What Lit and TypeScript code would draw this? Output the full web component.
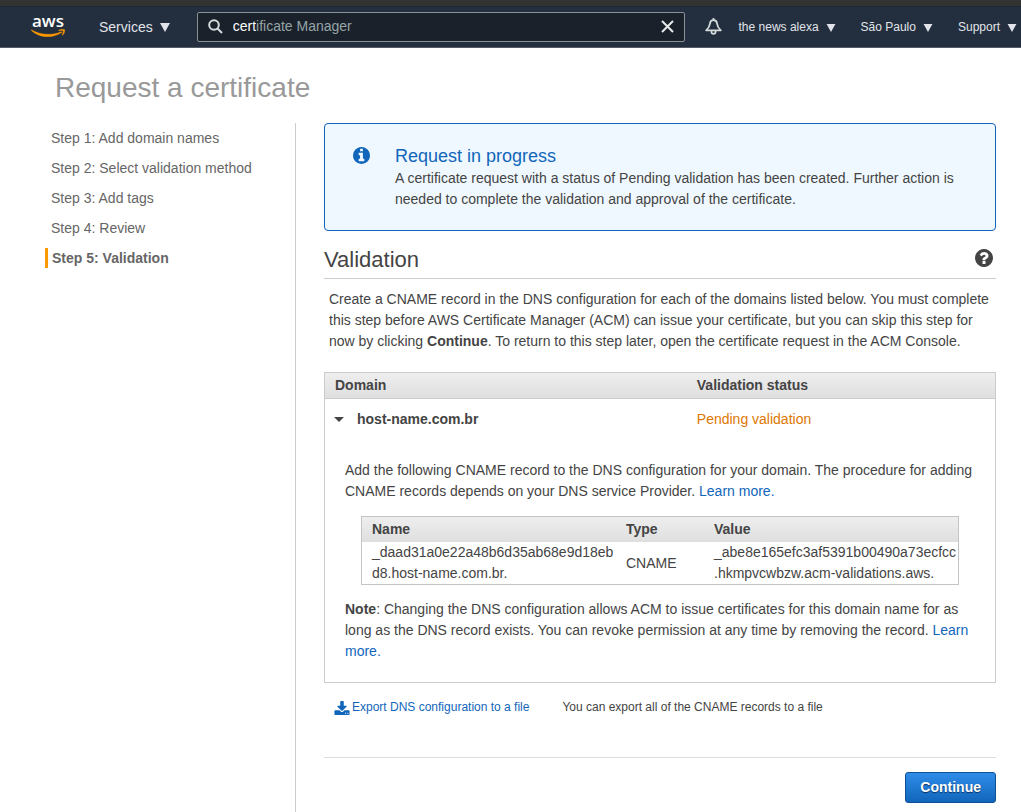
import { LitElement, html, css } from "lit";
import { customElement, property, state } from "lit/decorators.js";
import { classMap } from "lit/directives/class-map.js";

const caretDown = html`<svg class="caret" viewBox="0 0 10 9" aria-hidden="true"><path d="M0 0h10L5 9z" fill="currentColor" /></svg>`;

@customElement("console-header")
class ConsoleHeader extends LitElement {
  static styles = css`
    :host {
      display: block;
      border-top: 6px solid #333333;
      border-bottom: 1px solid #545b64;
      background: #232f3e;
      color: #e1e4ea;
    }
    .bar {
      display: flex;
      align-items: center;
      height: 41px;
      padding: 0 4px 0 31px;
      box-shadow: inset 0 1px 0 #1d2735;
      white-space: nowrap;
    }
    .logo {
      display: flex;
      flex-direction: column;
      align-items: center;
      width: 34px;
      padding-bottom: 3px;
      color: #ffffff;
      text-decoration: none;
      font: 600 17px/16px "Open Sans", "Noto Sans", sans-serif;
    }
    .smile {
      width: 34px;
      height: 8px;
    }
    button {
      display: flex;
      align-items: center;
      border: 0;
      padding: 0;
      background: none;
      color: inherit;
      font: inherit;
      cursor: pointer;
    }
    .services {
      gap: 7px;
      margin-left: 34px;
      padding-top: 2px;
      font-size: 14px;
    }
    .services .caret {
      width: 10px;
      height: 9px;
    }
    .search {
      display: flex;
      align-items: center;
      flex: 1;
      height: 28px;
      margin: 0 20px 0 27px;
      padding: 0 10px;
      border: 1px solid #879196;
      border-radius: 2px;
      background: #1a212b;
      font-size: 14px;
    }
    .glass {
      width: 15px;
      height: 15px;
      margin-right: 10px;
    }
    .query {
      field-sizing: content;
      border: 0;
      padding: 0;
      outline: 0;
      background: none;
      color: #ffffff;
      font: inherit;
    }
    .hint {
      flex: 1;
      color: #95a5a6;
    }
    .clear svg {
      width: 13px;
      height: 13px;
    }
    .bell {
      width: 17px;
      height: 17px;
    }
    .menus {
      display: flex;
      gap: 25px;
      margin-left: 17px;
      padding-top: 2px;
      font-size: 12px;
    }
    .menu {
      gap: 7px;
    }
    .menu .caret {
      width: 10px;
      height: 8px;
    }
  `;

  @state() private query = "cert";

  render() {
    return html`
      <header class="bar">
        <a class="logo" href="#">
          <span>aws</span>
          <svg class="smile" viewBox="0 113 304 69" aria-hidden="true" fill="#ff9900" stroke="#ff9900" stroke-width="3">
            <path d="M273.5,143.7c-32.9,24.3-80.7,37.2-121.8,37.2c-57.6,0-109.5-21.3-148.7-56.7c-3.1-2.8-0.3-6.6,3.4-4.4c42.4,24.6,94.7,39.5,148.8,39.5c36.5,0,76.6-7.6,113.5-23.2C274.2,133.6,278.9,139.7,273.5,143.7z" />
            <path d="M287.2,128.1c-4.2-5.4-27.8-2.6-38.5-1.3c-3.2,0.4-3.7-2.4-0.8-4.5c18.8-13.2,49.7-9.4,53.3-5c3.6,4.5-1,35.4-18.6,50.2c-2.7,2.3-5.3,1.1-4.1-1.9C282.5,155.7,291.4,133.4,287.2,128.1z" />
          </svg>
        </a>
        <button class="services">Services ${caretDown}</button>
        <div class="search" role="search">
          <svg class="glass" viewBox="0 0 15 15" aria-hidden="true" fill="none" stroke="#d5dbdb" stroke-width="2">
            <circle cx="6" cy="6" r="4.8" />
            <path d="M9.5 9.5L14 14" />
          </svg>
          <input
            class="query"
            aria-label="Search services"
            .value=${this.query}
            @input=${(e: Event) => (this.query = (e.target as HTMLInputElement).value)}
          />
          <span class="hint">${this.query === "cert" ? "ificate Manager" : ""}</span>
          <button class="clear" aria-label="Clear search" @click=${() => (this.query = "")}>
            <svg viewBox="0 0 13 13" aria-hidden="true" fill="none" stroke="#e6eaea" stroke-width="2"><path d="M1 1l11 11M12 1L1 12" /></svg>
          </button>
        </div>
        <button aria-label="Notifications">
          <svg class="bell" viewBox="0 0 17 17" aria-hidden="true" fill="none" stroke="#d5dbdb" stroke-width="1.8" stroke-linejoin="round">
            <path d="M8.5 2.2C6.3 2.2 5.2 3.6 5 5.500C4.700 8.200 3.800 10 1.200 12.300h14.600C13.200 10 12.300 8.200 12 5.500C11.800 3.600 10.700 2.200 8.500 2.200z" />
            <path d="M8.500 0v2.200" />
            <path d="M6.500 13v1c0 1.200.8 1.900 2 1.900s2-.7 2-1.900v-1" />
          </svg>
        </button>
        <nav class="menus" aria-label="Account">
          ${["the news alexa", "São Paulo", "Support"].map(
            (label) => html`<button class="menu">${label} ${caretDown}</button>`
          )}
        </nav>
      </header>
    `;
  }
}

@customElement("wizard-steps")
class WizardSteps extends LitElement {
  static styles = css`
    :host {
      display: block;
    }
    ol {
      list-style: none;
      display: flex;
      flex-direction: column;
      gap: 10px;
      margin: 0;
      padding: 5px 16px 0 45px;
    }
    li {
      border-left: 3px solid transparent;
      padding-left: 3px;
      line-height: 20px;
      color: #666666;
    }
    .current {
      border-color: #ff9900;
      padding-left: 4px;
      font-weight: bold;
    }
  `;

  @property({ type: Number }) current = 5;

  render() {
    const steps = ["Add domain names", "Select validation method", "Add tags", "Review", "Validation"];
    return html`<ol>
      ${steps.map((name, i) => {
        const current = i + 1 === this.current;
        return html`<li class=${classMap({ current })} aria-current=${current ? "step" : "false"}>Step ${i + 1}: ${name}</li>`;
      })}
    </ol>`;
  }
}

@customElement("app-root")
class AppRoot extends LitElement {
  static styles = css`
    :host {
      display: flex;
      flex-direction: column;
      min-height: 100vh;
      background: #ffffff;
      color: #444444;
      font: 14px/21px "Liberation Sans", Arial, sans-serif;
    }
    h1,
    h2,
    h3,
    p {
      margin: 0;
      font-weight: normal;
    }
    a {
      color: #1166bb;
      text-decoration: none;
    }
    h1 {
      padding: 22px 25px 17px 55px;
      color: #999999;
      font-size: 28px;
      line-height: 36px;
    }
    .columns {
      display: flex;
      flex: 1;
    }
    .side {
      flex: none;
      box-sizing: border-box;
      width: 296px;
      border-right: 1px solid #cccccc;
    }
    main {
      flex: 1;
      min-width: 0;
      padding: 0 25px 9px 28px;
    }
    .notice {
      display: flex;
      gap: 25px;
      padding: 20px 28px;
      border: 1px solid #1166bb;
      border-radius: 4px;
      background: #f0f8ff;
    }
    .info {
      flex: none;
      width: 17px;
      height: 17px;
      margin-top: 3px;
      color: #1166bb;
    }
    .notice h2 {
      color: #1166bb;
      font-size: 18px;
      line-height: 24px;
    }
    .section-head {
      display: flex;
      align-items: flex-start;
      justify-content: space-between;
      margin-top: 10px;
      padding: 5px 3px 4px 0;
      border-bottom: 1px solid #cccccc;
    }
    .section-head h2 {
      font-size: 22px;
      line-height: 28px;
    }
    .help {
      border: 0;
      margin-top: 3px;
      padding: 0;
      background: none;
      color: #444444;
      line-height: 0;
      cursor: pointer;
    }
    .help svg {
      width: 18px;
      height: 18px;
    }
    .intro {
      margin: 10px 5px 20px;
    }
    table {
      width: 100%;
      table-layout: fixed;
      border: 1px solid #cccccc;
      border-spacing: 0;
    }
    th {
      height: 25px;
      padding: 0 10px;
      background: linear-gradient(#eeeeee, #dfdfdf);
      text-align: left;
      font-weight: bold;
      line-height: 21px;
    }
    td {
      padding: 0;
    }
    .domains > thead th {
      border-bottom: 1px solid #cccccc;
    }
    .domain-col {
      width: 54%;
    }
    .type-col {
      width: 88px;
    }
    .expand {
      display: flex;
      align-items: center;
      gap: 13px;
      height: 41px;
      border: 0;
      padding: 0 9px;
      background: none;
      color: inherit;
      font: inherit;
      font-weight: bold;
      cursor: pointer;
    }
    .expand svg {
      width: 10px;
      height: 5px;
    }
    .pending {
      padding-left: 10px;
      color: #dd7700;
    }
    .detail {
      padding: 20px 20px 20px;
    }
    .record {
      width: auto;
      margin: 14px 16px;
    }
    .record table {
      border-color: #c4c4c4;
    }
    .record td {
      padding-left: 10px;
      overflow-wrap: anywhere;
    }
    .export {
      display: flex;
      gap: 33px;
      padding: 14px 10px 0;
      font-size: 12px;
    }
    .export a {
      display: flex;
      align-items: center;
      gap: 2px;
    }
    .export svg {
      width: 16px;
      height: 14px;
    }
    .actions {
      display: flex;
      justify-content: flex-end;
      margin-top: 39px;
      padding-top: 14px;
      border-top: 1px solid #dddddd;
    }
    .primary {
      height: 31px;
      padding: 0 14px;
      border: 1px solid #0f4f94;
      border-radius: 3px;
      background: linear-gradient(#2f8ce8, #1166bb);
      color: #ffffff;
      font: bold 14px/21px "Liberation Sans", Arial, sans-serif;
      text-shadow: 0 1px 1px #0a3060;
      cursor: pointer;
    }
  `;

  @state() private open = true;

  private renderDetail() {
    return html`
      <tr>
        <td colspan="2">
          <div class="detail">
            <p>
              Add the following CNAME record to the DNS configuration for your domain. The procedure for adding CNAME
              records depends on your DNS service Provider. <a href="#">Learn more.</a>
            </p>
            <div class="record">
              <table>
                <colgroup><col /><col class="type-col" /><col /></colgroup>
                <thead>
                  <tr><th scope="col">Name</th><th scope="col">Type</th><th scope="col">Value</th></tr>
                </thead>
                <tbody>
                  <tr>
                    <td>_daad31a0e22a48b6d35ab68e9d18ebd8.host-name.com.br.</td>
                    <td>CNAME</td>
                    <td>_abe8e165efc3af5391b00490a73ecfcc.hkmpvcwbzw.acm-validations.aws.</td>
                  </tr>
                </tbody>
              </table>
            </div>
            <p>
              <b>Note</b>: Changing the DNS configuration allows ACM to issue certificates for this domain name for as
              long as the DNS record exists. You can revoke permission at any time by removing the record.
              <a href="#">Learn more.</a>
            </p>
          </div>
        </td>
      </tr>
    `;
  }

  render() {
    return html`
      <console-header></console-header>
      <h1>Request a certificate</h1>
      <div class="columns">
        <aside class="side"><wizard-steps .current=${5}></wizard-steps></aside>
        <main>
          <section class="notice">
            <svg class="info" viewBox="128 128 1536 1536" fill="currentColor" aria-hidden="true">
              <path d="M1152 1376v-160q0-14-9-23t-23-9h-96v-512q0-14-9-23t-23-9h-320q-14 0-23 9t-9 23v160q0 14 9 23t23 9h96v320h-96q-14 0-23 9t-9 23v160q0 14 9 23t23 9h448q14 0 23-9t9-23zm-128-896v-160q0-14-9-23t-23-9h-192q-14 0-23 9t-9 23v160q0 14 9 23t23 9h192q14 0 23-9t9-23zm640 416q0 209-103 385.5t-279.5 279.5-385.5 103-385.5-103-279.5-279.5-103-385.5 103-385.5 279.5-279.5 385.5-103 385.5 103 279.5 279.5 103 385.5z" />
            </svg>
            <div>
              <h2>Request in progress</h2>
              <p>
                A certificate request with a status of Pending validation has been created. Further action is needed to
                complete the validation and approval of the certificate.
              </p>
            </div>
          </section>

          <div class="section-head">
            <h2>Validation</h2>
            <button class="help" aria-label="Help">
              <svg viewBox="128 128 1536 1536" fill="currentColor" aria-hidden="true">
                <path d="M1024 1376v-192q0-14-9-23t-23-9h-192q-14 0-23 9t-9 23v192q0 14 9 23t23 9h192q14 0 23-9t9-23zm256-672q0-88-55.5-163t-138.5-116-170-41q-243 0-371 213-15 24 8 42l132 100q7 6 19 6 16 0 25-12 53-68 86-92 34-24 86-24 48 0 85.5 26t37.5 59q0 38-20 61t-68 45q-63 28-115.5 86.5t-52.5 125.5v36q0 14 9 23t23 9h192q14 0 23-9t9-23q0-19 21.5-49.5t54.5-49.5q32-18 49-28.5t46-35 44.5-48 28-60.5 12.5-81zm384 192q0 209-103 385.5t-279.5 279.5-385.5 103-385.5-103-279.5-279.5-103-385.5 103-385.5 279.5-279.5 385.5-103 385.5 103 279.5 279.5 103 385.5z" />
              </svg>
            </button>
          </div>
          <p class="intro">
            Create a CNAME record in the DNS configuration for each of the domains listed below. You must complete this
            step before AWS Certificate Manager (ACM) can issue your certificate, but you can skip this step for now by
            clicking <b>Continue</b>. To return to this step later, open the certificate request in the ACM Console.
          </p>

          <table class="domains">
            <colgroup><col class="domain-col" /><col /></colgroup>
            <thead>
              <tr><th scope="col">Domain</th><th scope="col">Validation status</th></tr>
            </thead>
            <tbody>
              <tr>
                <td>
                  <button class="expand" aria-expanded=${this.open} @click=${() => (this.open = !this.open)}>
                    <svg viewBox="0 0 10 5" aria-hidden="true"><path d="M0 0h10L5 5z" fill="currentColor" /></svg>
                    host-name.com.br
                  </button>
                </td>
                <td class="pending">Pending validation</td>
              </tr>
              ${this.open ? this.renderDetail() : ""}
            </tbody>
          </table>

          <div class="export">
            <a href="#">
              <svg viewBox="64 0 1664 1536" fill="currentColor" aria-hidden="true">
                <path d="M1344 1344q0-26-19-45t-45-19-45 19-19 45 19 45 45 19 45-19 19-45zm256 0q0-26-19-45t-45-19-45 19-19 45 19 45 45 19 45-19 19-45zm128-224v320q0 40-28 68t-68 28h-1472q-40 0-68-28t-28-68v-320q0-40 28-68t68-28h465l135 136q58 56 136 56t136-56l136-136h464q40 0 68 28t28 68zm-325-569q17 41-14 70l-448 448q-18 19-45 19t-45-19l-448-448q-31-29-14-70 17-39 59-39h256v-448q0-26 19-45t45-19h256q26 0 45 19t19 45v448h256q42 0 59 39z" />
              </svg>
              Export DNS configuration to a file
            </a>
            <span>You can export all of the CNAME records to a file</span>
          </div>

          <div class="actions"><button class="primary">Continue</button></div>
        </main>
      </div>
    `;
  }
}
